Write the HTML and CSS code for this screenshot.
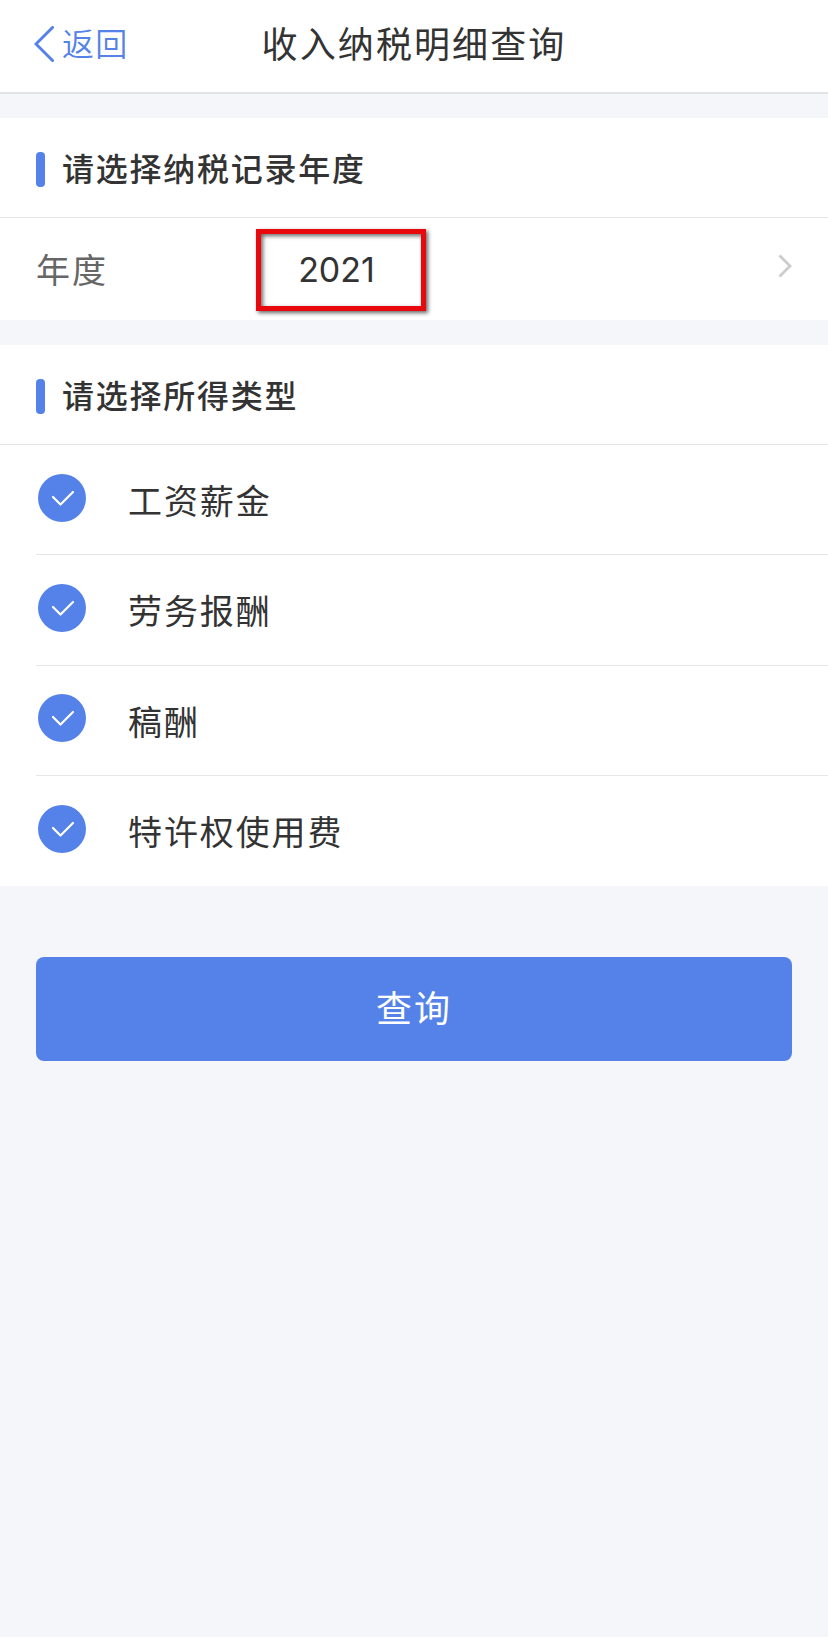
FILE: index.html
```
<!DOCTYPE html>
<html lang="zh-CN">
  <head>
    <meta charset="UTF-8" />
    <meta name="viewport" content="width=device-width, initial-scale=1.0" />
    <title>收入纳税明细查询</title>
    <link rel="stylesheet" href="styles.css">
  </head>
  <body>
    <header class="header">
      <a class="back" href="#">
        <svg class="back-icon" viewBox="0 0 20 36"><path d="M18.5 1.5 L2 18 L18.5 34.5" /></svg>
        <span>返回</span>
      </a>
      <h1 class="header-title">收入纳税明细查询</h1>
    </header>

    <section class="card">
      <h2 class="card-title"><span>请选择纳税记录年度</span></h2>
      <div class="year">
        <span class="year-label">年度</span>
        <span class="year-value">2021</span>
        <svg class="year-arrow" viewBox="0 0 14 24"><path d="M1.5 1.5 L12 12 L1.5 22.5" /></svg>
      </div>
    </section>

    <section class="card">
      <h2 class="card-title"><span>请选择所得类型</span></h2>
      <ul class="list">
        <li class="item">
          <svg class="check" viewBox="0 0 48 48"><circle cx="24" cy="24" r="24" /><path d="M15 23 L22.5 30.5 L35 18" /></svg>
          <span>工资薪金</span>
        </li>
        <li class="item">
          <svg class="check" viewBox="0 0 48 48"><circle cx="24" cy="24" r="24" /><path d="M15 23 L22.5 30.5 L35 18" /></svg>
          <span>劳务报酬</span>
        </li>
        <li class="item">
          <svg class="check" viewBox="0 0 48 48"><circle cx="24" cy="24" r="24" /><path d="M15 23 L22.5 30.5 L35 18" /></svg>
          <span>稿酬</span>
        </li>
        <li class="item">
          <svg class="check" viewBox="0 0 48 48"><circle cx="24" cy="24" r="24" /><path d="M15 23 L22.5 30.5 L35 18" /></svg>
          <span>特许权使用费</span>
        </li>
      </ul>
    </section>

    <button class="submit">查询</button>
  </body>
</html>
```

FILE: styles.css
```
* {
  box-sizing: border-box;
}
body {
  margin: 0;
  min-height: 100vh;
  background-color: #f4f6fa;
  color: #333;
  font-family: "Noto Sans CJK SC", sans-serif;
}
.header {
  display: grid;
  grid-template-columns: 1fr auto 1fr;
  align-items: center;
  height: 94px;
  padding: 0 34px 8px;
  background-color: #fff;
  border-bottom: 2px solid #e2e3e5;
}
.back {
  display: flex;
  align-items: center;
  gap: 8px;
  color: #5582e9;
  font-size: 32px;
  font-weight: 350;
  line-height: 40px;
  letter-spacing: 1.2px;
  text-decoration: none;
}
.back-icon {
  width: 20px;
  height: 36px;
  margin-top: 3px;
  fill: none;
  stroke: #5582e9;
  stroke-width: 3;
  stroke-linecap: round;
}
.header-title {
  margin: 0;
  font-size: 36px;
  font-weight: 400;
  line-height: 40px;
  letter-spacing: 2.1px;
}
.card {
  margin-top: 24px;
  background-color: #fff;
}
.card + .card {
  margin-top: 25px;
}
.card-title {
  display: flex;
  align-items: center;
  gap: 18px;
  height: 100px;
  margin: 0;
  padding-left: 36px;
  border-bottom: 1px solid #e4e5e7;
  font-size: 32px;
  font-weight: 500;
  letter-spacing: 1.75px;
}
.card-title span {
  padding-bottom: 2px;
}
.card-title::before {
  content: "";
  width: 9px;
  height: 35px;
  margin-top: 3px;
  margin-right: -1px;
  border-radius: 4px;
  background-color: #5582e9;
}
.year {
  display: flex;
  align-items: center;
  height: 102px;
  padding: 0 36px;
}
.year-label {
  width: 220px;
  padding-bottom: 2px;
  color: #666;
  font-size: 34px;
  letter-spacing: 1.9px;
}
.year-value {
  display: flex;
  align-items: center;
  justify-content: center;
  width: 170px;
  height: 82px;
  margin-top: 2px;
  padding-right: 9px;
  padding-bottom: 1px;
  border: 5.5px solid #e8090f;
  box-shadow: 2px 2px 4px rgba(0, 0, 0, 0.6), inset 2px 2px 4px rgba(0, 0, 0, 0.6);
  font-family: Inter, sans-serif;
  font-size: 34px;
}
.year-arrow {
  width: 14px;
  height: 24px;
  margin-left: auto;
  margin-bottom: 6px;
  fill: none;
  stroke: #ccc;
  stroke-width: 2.8;
}
.list {
  margin: 0;
  padding: 0 0 0 36px;
  list-style: none;
}
.item {
  display: flex;
  align-items: center;
  gap: 42px;
  height: 110.25px;
  padding-left: 2px;
  border-bottom: 1px solid #e6e7e9;
  font-size: 34px;
  letter-spacing: 1.9px;
}
.item:last-child {
  border-bottom: none;
}
.check {
  width: 48px;
  height: 48px;
  margin-bottom: 4px;
  fill: #5582e9;
}
.check path {
  fill: none;
  stroke: #fff;
  stroke-width: 2.2;
  stroke-linecap: round;
  stroke-linejoin: round;
}
.submit {
  display: block;
  width: calc(100% - 72px);
  height: 104px;
  margin: 71px 36px 0;
  padding: 0 0 6px;
  border: none;
  border-radius: 8px;
  background-color: #5582e9;
  color: #fff;
  font-family: inherit;
  font-size: 36px;
  letter-spacing: 2.1px;
}
```
